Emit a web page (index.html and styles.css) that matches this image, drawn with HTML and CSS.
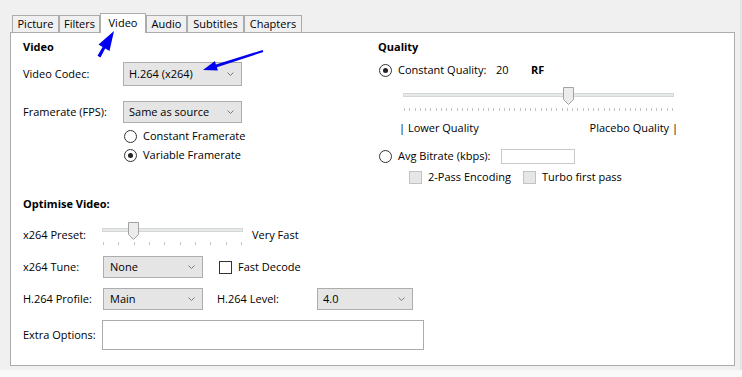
FILE: index.html
```html
<!DOCTYPE html>
<html>
<head>
<meta charset="utf-8">
<link rel="stylesheet" href="styles.css">
</head>
<body>
<div class="main">
  <div class="tabs">
    <div class="tab t-picture">Picture</div>
    <div class="tab t-filters">Filters</div>
    <div class="tab active t-video">Video</div>
    <div class="tab t-audio">Audio</div>
    <div class="tab t-subtitles">Subtitles</div>
    <div class="tab t-chapters">Chapters</div>
  </div>
  <div class="panel">
    <div class="top">
      <div class="col">
        <div class="title">Video</div>
        <div class="row r-codec">
          <span class="lbl l-main">Video Codec:</span>
          <div class="combo c-codec"><span>H.264 (x264)</span><svg class="chev" width="7" height="4" viewBox="0 0 7 4"><path d="M0.5 0.5 L3.5 3.5 L6.5 0.5" fill="none" stroke="#7a7a7a"/></svg></div>
        </div>
        <div class="row r-fps">
          <span class="lbl l-main">Framerate (FPS):</span>
          <div class="combo c-fps"><span>Same as source</span><svg class="chev" width="7" height="4" viewBox="0 0 7 4"><path d="M0.5 0.5 L3.5 3.5 L6.5 0.5" fill="none" stroke="#7a7a7a"/></svg></div>
        </div>
        <div class="opt r-cfr"><span class="radio"></span><span class="opt-text">Constant Framerate</span></div>
        <div class="opt r-vfr"><span class="radio on"></span><span class="opt-text">Variable Framerate</span></div>
      </div>
      <div class="col">
        <div class="title">Quality</div>
        <div class="opt r-cq"><span class="radio on"></span><span class="opt-text cq-lbl">Constant Quality:</span><span class="cq-val">20</span><b class="rf">RF</b></div>
        <div class="slider s-quality">
          <div class="track"></div>
          <div class="ticks">
            <i></i><i></i><i></i><i></i><i></i><i></i><i></i><i></i><i></i><i></i>
            <i></i><i></i><i></i><i></i><i></i><i></i><i></i><i></i><i></i><i></i>
            <i></i><i></i><i></i><i></i><i></i><i></i><i></i><i></i><i></i><i></i>
            <i></i><i></i><i></i><i></i><i></i><i></i><i></i><i></i><i></i><i></i>
            <i></i><i></i><i></i><i></i><i></i><i></i><i></i><i></i><i></i><i></i>
            <i></i><i></i>
          </div>
          <svg class="thumb" style="left:160px;top:1px" width="11" height="18" viewBox="0 0 11 18"><polygon points="0.5,0.5 10.5,0.5 10.5,12.5 5.5,17.5 0.5,12.5" fill="#ececec" stroke="#a2a2a2"/></svg>
        </div>
        <div class="scale"><span>| Lower Quality</span><span>Placebo Quality |</span></div>
        <div class="opt r-abr"><span class="radio"></span><span class="opt-text abr-lbl">Avg Bitrate (kbps):</span><span class="textbox tb-abr"></span></div>
        <div class="checks">
          <span class="cb dis"></span><span class="cb-text cb-first">2-Pass Encoding</span>
          <span class="cb dis"></span><span class="cb-text">Turbo first pass</span>
        </div>
      </div>
    </div>

    <div class="title t-opt">Optimise Video:</div>
    <div class="row r-preset">
      <span class="lbl l-preset">x264 Preset:</span>
      <div class="slider s-preset">
        <div class="track"></div>
        <div class="ticks">
          <i></i><i></i><i></i><i></i><i></i><i></i><i></i><i></i><i></i><i></i>
        </div>
        <svg class="thumb" style="left:26px;top:0px" width="11" height="18" viewBox="0 0 11 18"><polygon points="0.5,0.5 10.5,0.5 10.5,12.5 5.5,17.5 0.5,12.5" fill="#ececec" stroke="#a2a2a2"/></svg>
      </div>
      <span class="preset-val">Very Fast</span>
    </div>
    <div class="row r-tune">
      <span class="lbl l-opt">x264 Tune:</span>
      <div class="combo c-tune"><span>None</span><svg class="chev" width="7" height="4" viewBox="0 0 7 4"><path d="M0.5 0.5 L3.5 3.5 L6.5 0.5" fill="none" stroke="#7a7a7a"/></svg></div>
      <span class="cb cb-fast"></span><span class="cb-text">Fast Decode</span>
    </div>
    <div class="row r-profile">
      <span class="lbl l-opt">H.264 Profile:</span>
      <div class="combo c-profile"><span>Main</span><svg class="chev" width="7" height="4" viewBox="0 0 7 4"><path d="M0.5 0.5 L3.5 3.5 L6.5 0.5" fill="none" stroke="#7a7a7a"/></svg></div>
      <span class="lbl l-level">H.264 Level:</span>
      <div class="combo c-level"><span>4.0</span><svg class="chev" width="7" height="4" viewBox="0 0 7 4"><path d="M0.5 0.5 L3.5 3.5 L6.5 0.5" fill="none" stroke="#7a7a7a"/></svg></div>
    </div>
    <div class="row r-extra">
      <span class="lbl l-extra">Extra Options:</span>
      <div class="textbox tb-extra"></div>
    </div>
  </div>
</div>
<div class="footer"></div>

<svg class="annot" width="742" height="377" viewBox="0 0 742 377">
  <polygon fill="#0000f0" points="114,31 109.5,51 105.2,48.5 100.5,57.5 97.5,55.8 102.6,47 98.5,44.6"/>
  <polygon fill="#0000f0" points="203,70 217.9,70.6 216.9,67.2 263.3,52 262.7,50 215.9,64.4 214.9,61"/>
</svg>
</body>
</html>
```

FILE: styles.css
```css
html, body {
  margin: 0;
  padding: 0;
}

body {
  width: 742px;
  height: 377px;
  overflow: hidden;
  position: relative;
  background: #f9f9f9;
  font-family: "Open Sans", "Noto Sans", sans-serif;
  font-size: 11px;
  line-height: 15px;
  color: #000;
}

.main {
  height: 370px;
  box-sizing: border-box;
  padding-top: 13px;
  background: #f0f0f0;
  border-right: 2px solid #dfe6ee;
}

.footer {
  height: 7px;
  background: #f9f9f9;
}

/* Tabs */
.tabs {
  display: flex;
  align-items: flex-end;
  height: 19px;
  margin-left: 12px;
}

.tab {
  box-sizing: border-box;
  height: 17px;
  border: 1px solid #acacac;
  border-bottom: none;
  background: #f0f0f0;
  text-align: center;
  line-height: 16px;
}

.tab.active {
  position: relative;
  z-index: 2;
  height: 20px;
  margin-bottom: -1px;
  padding-top: 1px;
  background: #fff;
}

.t-picture { width: 47px; }
.t-filters { width: 41px; }
.t-video { width: 46px; }
.t-audio { width: 41px; }
.t-subtitles { width: 57px; }
.t-chapters { width: 58px; }

/* Panel */
.panel {
  position: relative;
  z-index: 1;
  box-sizing: border-box;
  width: 725px;
  height: 334px;
  margin-left: 10px;
  padding: 6px 0 0 12px;
  background: #fff;
  border: 1px solid #acacac;
}

.top {
  display: grid;
  grid-template-columns: 355px 1fr;
  height: 146px;
}

.col {
  display: flex;
  flex-direction: column;
  align-items: flex-start;
}

.title {
  height: 15px;
  font-weight: 700;
}

.row {
  display: flex;
  align-items: center;
}

.lbl {
  flex: none;
}

/* lift text 1px within centred rows */
.row > .lbl,
.opt-text,
.cq-val,
.rf,
.cb-text,
.combo > span {
  padding-bottom: 2px;
}

.l-main { width: 100px; }
.l-opt { width: 80px; }
.l-preset { width: 79px; }
.l-extra { width: 79px; }

/* Combos */
.combo {
  box-sizing: border-box;
  display: flex;
  align-items: center;
  justify-content: space-between;
  padding: 0 7px 0 5px;
  background: #e5e5e5;
  border: 1px solid #adadad;
}

.chev {
  display: block;
  flex: none;
}

.r-codec { margin-top: 8px; height: 24px; }
.c-codec { width: 119px; height: 24px; }

.r-fps { margin-top: 15px; height: 22px; }
.c-fps { width: 119px; height: 22px; }

/* Radio / checkbox options */
.opt {
  display: flex;
  align-items: center;
  height: 19px;
}

.radio {
  flex: none;
  box-sizing: border-box;
  width: 13px;
  height: 13px;
  border: 1px solid #333;
  border-radius: 50%;
  background: #fff;
  display: flex;
  align-items: center;
  justify-content: center;
}

.radio.on::after {
  content: "";
  width: 5px;
  height: 5px;
  border-radius: 50%;
  background: #222;
}

.opt-text {
  margin-left: 6px;
}

.r-cfr { margin-top: 4px; margin-left: 101px; }
.r-vfr { margin-left: 101px; }

.r-cq { margin-top: 7px; margin-left: 1px; }
.cq-lbl { width: 98px; }
.cq-val { width: 35px; }
.rf { font-weight: 700; }

/* Sliders */
.slider {
  position: relative;
  flex: none;
}

.track {
  box-sizing: border-box;
  height: 4px;
  background: #e7eaea;
  border: 1px solid #d6d6d6;
}

.ticks {
  display: flex;
  justify-content: space-between;
  padding: 0 1px;
  height: 3px;
}

.ticks i {
  display: block;
  width: 1px;
  height: 3px;
  background: #c4c4c4;
}

.thumb {
  position: absolute;
  display: block;
}

.s-quality {
  width: 271px;
  height: 25px;
  margin-top: 6px;
  margin-left: 25px;
}

.s-quality .track { margin-top: 7px; }
.s-quality .ticks { margin-top: 11px; }

.scale {
  display: flex;
  justify-content: space-between;
  width: 279px;
  margin-top: 9px;
  margin-left: 21px;
}

.r-abr { margin-top: 12px; margin-left: 1px; }
.abr-lbl { width: 103px; }

.textbox {
  box-sizing: border-box;
  display: block;
  background: #fff;
}

.tb-abr {
  width: 74px;
  height: 15px;
  border: 1px solid #c9c9c9;
}

.checks {
  display: flex;
  align-items: center;
  height: 17px;
  margin-top: 3px;
  margin-left: 31px;
}

.cb {
  flex: none;
  box-sizing: border-box;
  width: 13px;
  height: 13px;
  border: 1px solid #333;
  background: #fff;
}

.cb.dis {
  background: #e6e6e6;
  border-color: #c2c2c2;
}

.cb-text {
  margin-left: 6px;
}

.cb-first { width: 95px; }

/* Optimise section */
.t-opt { margin-top: 11px; }

.r-preset {
  align-items: flex-start;
  height: 24px;
  margin-top: 11px;
}

.r-preset > .lbl,
.preset-val {
  padding-top: 5px;
  padding-bottom: 0;
}

.s-preset {
  width: 141px;
  height: 24px;
}

.s-preset .track { margin-top: 6px; }
.s-preset .ticks { margin-top: 10px; }

.preset-val { margin-left: 9px; }

.r-tune { margin-top: 10px; height: 22px; }
.c-tune { width: 100px; height: 22px; padding-left: 6px; }
.cb-fast { margin-left: 16px; }

.r-profile { margin-top: 10px; height: 22px; }
.c-profile { width: 100px; height: 22px; padding-left: 6px; }
.l-level { width: 100px; margin-left: 14px; }
.c-level { width: 96px; height: 22px; }

.r-extra { margin-top: 10px; height: 30px; }
.tb-extra {
  width: 322px;
  height: 30px;
  border: 1px solid #ababab;
}

/* Annotation arrows */
.annot {
  position: absolute;
  left: 0;
  top: 0;
  z-index: 5;
  pointer-events: none;
}
```
